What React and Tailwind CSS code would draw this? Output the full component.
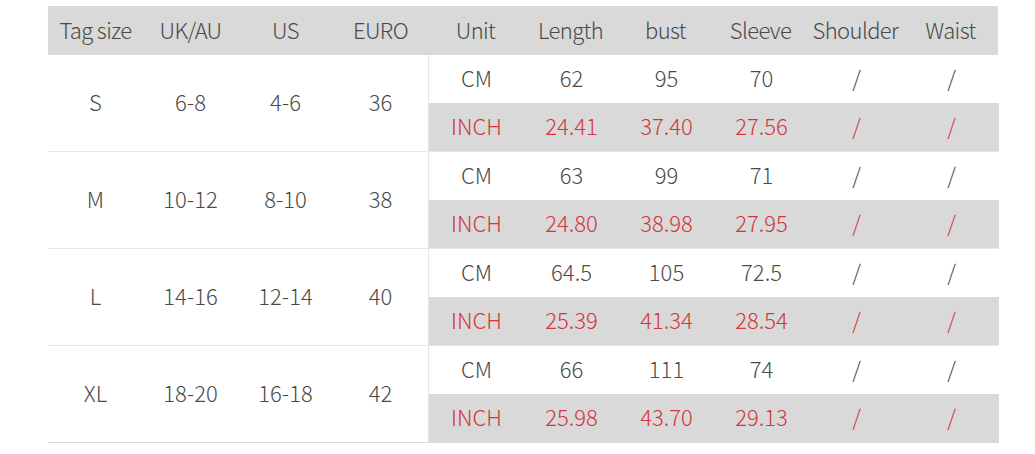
const HEAD = ['Tag size', 'UK/AU', 'US', 'EURO', 'Unit', 'Length', 'bust', 'Sleeve', 'Shoulder', 'Waist'];

const ROWS = [
  { size: 'S', uk: '6-8', us: '4-6', eu: '36', cm: ['62', '95', '70', '/', '/'], inch: ['24.41', '37.40', '27.56', '/', '/'] },
  { size: 'M', uk: '10-12', us: '8-10', eu: '38', cm: ['63', '99', '71', '/', '/'], inch: ['24.80', '38.98', '27.95', '/', '/'] },
  { size: 'L', uk: '14-16', us: '12-14', eu: '40', cm: ['64.5', '105', '72.5', '/', '/'], inch: ['25.39', '41.34', '28.54', '/', '/'] },
  { size: 'XL', uk: '18-20', us: '16-18', eu: '42', cm: ['66', '111', '74', '/', '/'], inch: ['25.98', '43.70', '29.13', '/', '/'] },
];

function Cell({ children, className = '' }) {
  return <div className={`w-[95px] pb-[3px] flex items-center justify-center whitespace-nowrap ${className}`}>{children}</div>;
}

export default function App() {
  return (
    <div
      className="w-[1035px] h-[454px] bg-white pl-[48px] pt-[6px] text-[22px] font-light text-[#4a4a4a]"
      style={{ fontFamily: '"Noto Sans CJK SC", "Noto Sans", sans-serif' }}
    >
      <div className="flex h-[49px] bg-[#d9d9d9] w-[950px]">
        {HEAD.map((h) => (
          <Cell key={h} className="tracking-[-0.6px]">{h}</Cell>
        ))}
      </div>

      {ROWS.map((r, i) => {
        const last = i === ROWS.length - 1;
        return (
          <div key={r.size} className="flex w-[950px]">
            <div className={`flex border-b ${last ? 'border-[#d6dae2]' : 'border-[#e8e8e8]'}`}>
              <Cell>{r.size}</Cell>
              <Cell>{r.uk}</Cell>
              <Cell>{r.us}</Cell>
              <Cell>{r.eu}</Cell>
            </div>
            <div className={`flex flex-col border-l border-[#e6e6e6] border-b ${last ? 'border-b-[#d6dae2]' : 'border-b-[#e8e8e8]'}`}>
              <div className="flex h-[48px]">
                <Cell>CM</Cell>
                {r.cm.map((v, j) => (
                  <Cell key={j}>{v}</Cell>
                ))}
              </div>
              <div className="flex h-[48px] bg-[#d9d9d9] text-[#d3353a]">
                <Cell>INCH</Cell>
                {r.inch.map((v, j) => (
                  <Cell key={j}>{v}</Cell>
                ))}
              </div>
            </div>
          </div>
        );
      })}
    </div>
  );
}
